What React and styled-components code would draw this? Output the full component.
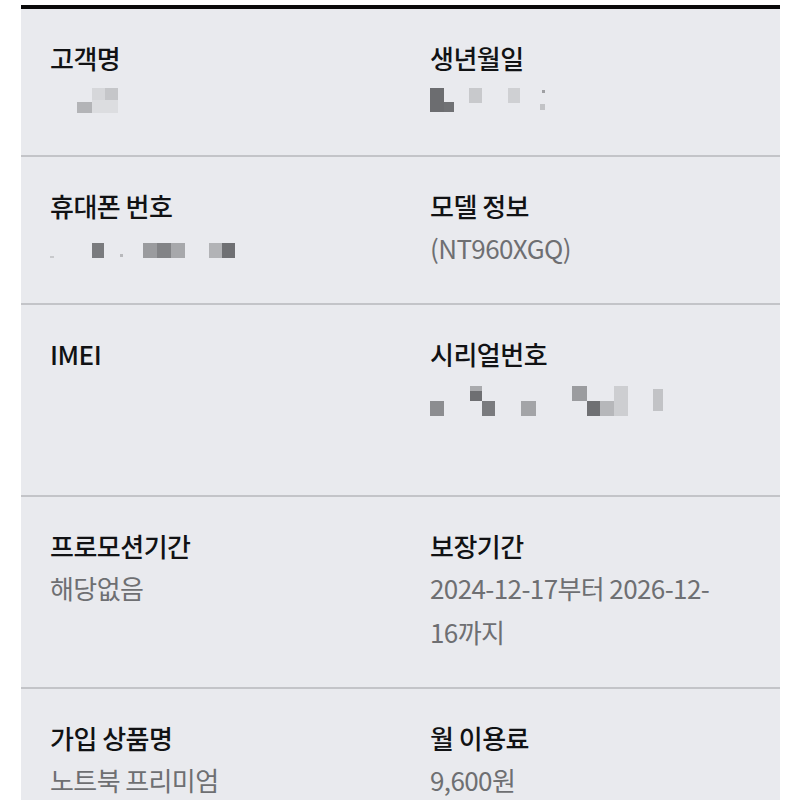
import React from "react";
import styled, { createGlobalStyle } from "styled-components";

const GlobalStyle = createGlobalStyle`
  html, body {
    margin: 0;
    padding: 0;
    background: #ffffff;
  }
  body {
    font-family: "Noto Sans CJK KR", "Noto Sans", sans-serif;
  }
`;

const Page = styled.div`
  padding: 5px 20px 0 21px;
  height: 800px;
  overflow: hidden;
  box-sizing: border-box;
`;

const Panel = styled.div`
  background: #e9eaee;
  border-top: 4px solid #0a0a0a;
`;

const Row = styled.div`
  display: grid;
  grid-template-columns: 380px 1fr;
  padding: 29px 50px 33px 29px;
  border-bottom: 2px solid #c3c4c8;
`;

const Cell = styled.div`
  display: flex;
  flex-direction: column;
  min-width: 0;
`;

const Label = styled.div`
  font-size: 26px;
  line-height: 40px;
  font-weight: 500;
  color: #111214;
  letter-spacing: -0.5px;
`;

const Value = styled.div`
  font-size: 26px;
  line-height: 44px;
  color: #6e6f72;
  letter-spacing: -0.6px;
  min-height: ${(p) => (p.lines || 1) * 44}px;
`;

const MosaicBox = styled.svg`
  display: block;
  height: ${(p) => (p.lines || 1) * 44}px;
`;

// pixelated (blurred) values: [x, y, w, h, colour], relative to the value box
const Mosaic = ({ blocks, width = 260, lines }) => (
  <MosaicBox width={width} lines={lines}>
    {blocks.map(([x, y, w, h, c], i) => (
      <rect key={i} x={x} y={y} width={w} height={h} fill={c} />
    ))}
  </MosaicBox>
);

const nameBlocks = [
  [42, 10, 13, 14, "#d6d7da"],
  [55, 10, 13, 12, "#c5c6c9"],
  [27, 24, 15, 11, "#b3b4b7"],
  [42, 22, 26, 13, "#dcdde0"],
];

const birthBlocks = [
  [0, 10, 14, 24, "#6c6d70"],
  [14, 24, 10, 10, "#707174"],
  [39, 10, 13, 15, "#c8c9cc"],
  [78, 10, 12, 15, "#cfd0d3"],
  [112, 12, 3, 3, "#9fa0a3"],
  [110, 26, 5, 6, "#c2c3c6"],
];

const phoneBlocks = [
  [0, 30, 4, 2, "#c8c9cc"],
  [42, 17, 12, 15, "#7a7b7e"],
  [70, 28, 3, 3, "#b8b9bc"],
  [93, 17, 14, 15, "#9a9b9e"],
  [107, 17, 14, 15, "#828386"],
  [121, 17, 14, 15, "#a7a8ab"],
  [159, 17, 13, 15, "#b2b3b6"],
  [172, 17, 13, 15, "#6f7073"],
];

const serialBlocks = [
  [0, 27, 14, 15, "#8c8d90"],
  [40, 12, 12, 5, "#a9aaad"],
  [40, 17, 12, 10, "#6e6f72"],
  [52, 27, 13, 15, "#7a7b7e"],
  [91, 27, 15, 15, "#a3a4a7"],
  [142, 12, 15, 15, "#9b9c9f"],
  [157, 27, 13, 15, "#6f7073"],
  [170, 27, 14, 15, "#b6b7ba"],
  [184, 12, 14, 30, "#cdced1"],
  [223, 15, 10, 22, "#c2c3c6"],
];

const items = [
  [
    { label: "고객명", mosaic: nameBlocks },
    { label: "생년월일", mosaic: birthBlocks },
  ],
  [
    { label: "휴대폰 번호", mosaic: phoneBlocks },
    { label: "모델 정보", value: "(NT960XGQ)" },
  ],
  [
    { label: "IMEI", value: "", lines: 2 },
    { label: "시리얼번호", mosaic: serialBlocks, lines: 2 },
  ],
  [
    { label: "프로모션기간", value: "해당없음" },
    { label: "보장기간", value: "2024-12-17부터 2026-12-\u200B16까지", lines: 2 },
  ],
  [
    { label: "가입 상품명", value: "노트북 프리미엄" },
    { label: "월 이용료", value: "9,600원" },
  ],
];

const App = () => (
  <>
    <GlobalStyle />
    <Page>
      <Panel>
        {items.map((row, i) => (
          <Row key={i}>
            {row.map((item) => (
              <Cell key={item.label}>
                <Label>{item.label}</Label>
                {item.mosaic ? (
                  <Mosaic blocks={item.mosaic} lines={item.lines} />
                ) : (
                  <Value lines={item.lines}>{item.value}</Value>
                )}
              </Cell>
            ))}
          </Row>
        ))}
      </Panel>
    </Page>
  </>
);

export default App;
